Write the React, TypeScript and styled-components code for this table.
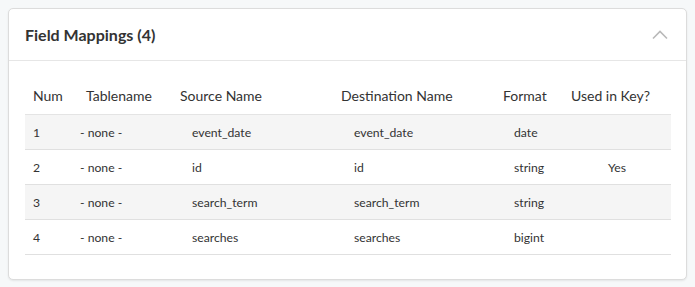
import styled, { createGlobalStyle } from "styled-components";

const GlobalStyle = createGlobalStyle`
  html, body {
    margin: 0;
    padding: 0;
    background: #f6f8f9;
    font-family: Lato, "Open Sans", sans-serif;
    color: #333;
  }
`;

type Column = {
  key: string;
  label: string;
  width: number;
  bodyPad: number;
  center?: boolean;
};

const columns: Column[] = [
  { key: "num", label: "Num", width: 53, bodyPad: 8 },
  { key: "table", label: "Tablename", width: 94, bodyPad: 2 },
  { key: "source", label: "Source Name", width: 161, bodyPad: 20 },
  { key: "dest", label: "Destination Name", width: 162, bodyPad: 21 },
  { key: "format", label: "Format", width: 68, bodyPad: 19 },
  { key: "key", label: "Used in Key?", width: 108, bodyPad: 0, center: true },
];

const rows: Record<string, string>[] = [
  { num: "1", table: "- none -", source: "event_date", dest: "event_date", format: "date", key: "" },
  { num: "2", table: "- none -", source: "id", dest: "id", format: "string", key: "Yes" },
  { num: "3", table: "- none -", source: "search_term", dest: "search_term", format: "string", key: "" },
  { num: "4", table: "- none -", source: "searches", dest: "searches", format: "bigint", key: "" },
];

export default function App() {
  return (
    <>
      <GlobalStyle />
      <Page>
        <Card>
          <CardHeader>
            <Title>Field Mappings (4)</Title>
            <Chevron width="16" height="10" viewBox="0 0 16 10">
              <path d="M1 8.5 L8 1.5 L15 8.5" fill="none" stroke="#b9b9b9" strokeWidth="1.6" />
            </Chevron>
          </CardHeader>
          <CardBody>
            <Table>
              <colgroup>
                {columns.map((c) => (
                  <col key={c.key} style={{ width: c.width }} />
                ))}
              </colgroup>
              <thead>
                <tr>
                  {columns.map((c) => (
                    <HeadCell key={c.key}>{c.label}</HeadCell>
                  ))}
                </tr>
              </thead>
              <tbody>
                {rows.map((r, i) => (
                  <Row key={r.num} $striped={i % 2 === 0}>
                    {columns.map((c) => (
                      <Cell key={c.key} $pad={c.bodyPad} $center={c.center}>
                        {r[c.key]}
                      </Cell>
                    ))}
                  </Row>
                ))}
              </tbody>
            </Table>
          </CardBody>
        </Card>
      </Page>
    </>
  );
}

const Page = styled.div`
  padding: 8px;
  width: 695px;
  box-sizing: border-box;
`;

const Card = styled.div`
  width: 679px;
  box-sizing: border-box;
  background: #fff;
  border: 1px solid #dcdcdc;
  border-radius: 5px;
  box-shadow: 0 1px 2px rgba(0, 0, 0, 0.08);
`;

const CardHeader = styled.div`
  display: flex;
  align-items: center;
  justify-content: space-between;
  height: 51px;
  padding: 0 18px 0 16px;
  border-bottom: 1px solid #e6e6e6;
`;

const Title = styled.h3`
  margin: 0;
  font-size: 16px;
  font-weight: 700;
  color: #333;
`;

const Chevron = styled.svg`
  display: block;
`;

const CardBody = styled.div`
  padding: 25px 16px 24px 16px;
`;

const Table = styled.table`
  width: 646px;
  border-collapse: collapse;
  table-layout: fixed;
`;

const HeadCell = styled.th`
  text-align: left;
  font-weight: 400;
  font-size: 14px;
  color: #333;
  padding: 0 0 9px 8px;
  height: 19px;
  border-bottom: 1px solid #e4e4e4;
  white-space: nowrap;
`;

const Row = styled.tr<{ $striped: boolean }>`
  background: ${({ $striped }) => ($striped ? "#f5f5f5" : "#fff")};
  border-bottom: 1px solid #e0e0e0;
`;

const Cell = styled.td<{ $pad: number; $center?: boolean }>`
  height: 34px;
  padding: 0 0 0 ${({ $pad }) => $pad}px;
  text-align: ${({ $center }) => ($center ? "center" : "left")};
  font-size: 12.2px;
  color: #333;
  white-space: nowrap;
`;
